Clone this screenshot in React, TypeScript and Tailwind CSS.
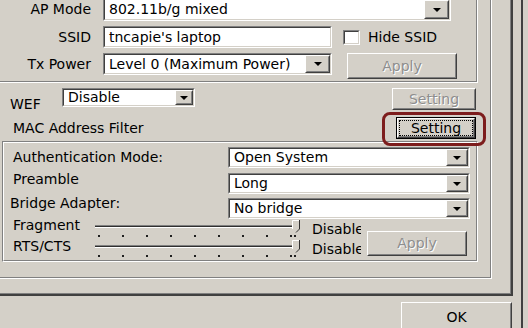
import type { ReactNode } from "react";

// disabled caption: grey text with the white emboss of classic Windows
const dim = "text-[#8e8e8e] [text-shadow:1px_1px_0_#ffffff]";

function Sunken({ className, children }: { className: string; children?: ReactNode }) {
  return (
    <div className={`shrink-0 border border-t-[#808080] border-l-[#808080] border-r-white border-b-white ${className}`}>
      <div className="flex h-full w-full items-center border border-t-[#404040] border-l-[#404040] border-r-[#d4d0c8] border-b-[#d4d0c8] bg-white">
        {children}
      </div>
    </div>
  );
}

function Raised({ className, children }: { className: string; children?: ReactNode }) {
  return (
    <div className={`shrink-0 border border-t-white border-l-white border-r-[#404040] border-b-[#404040] ${className}`}>
      <div className="flex h-full w-full items-center justify-center border border-t-[#d4d0c8] border-l-[#d4d0c8] border-r-[#808080] border-b-[#808080] bg-[#d4d0c8]">
        {children}
      </div>
    </div>
  );
}

function Arrow() {
  return (
    <svg width="8" height="4" viewBox="0 0 8 4">
      <path d="M0 0h8L4 4z" fill="#000" />
    </svg>
  );
}

function Combo({ className, btn, children }: { className: string; btn: string; children: ReactNode }) {
  return (
    <Sunken className={className}>
      <span className="flex-1 overflow-hidden whitespace-nowrap pl-[4px]">{children}</span>
      <Raised className={`h-full ${btn}`}>
        <Arrow />
      </Raised>
    </Sunken>
  );
}

function Slider({ className }: { className?: string }) {
  const ticks = [3, 27, 51, 75, 99, 123, 147, 171, 195, 199];
  return (
    <svg width="207" height="20" viewBox="0 0 207 20" className={`shrink-0 ${className ?? ""}`}>
      <rect x="0" y="6" width="204" height="1" fill="#808080" />
      <rect x="0" y="7" width="204" height="1" fill="#303030" />
      <rect x="0" y="8" width="204" height="1" fill="#ffffff" />
      {ticks.map((t) => (
        <rect key={t} x={t} y="16" width="2" height="2" fill="#202020" />
      ))}
      <path d="M197 1h7v9l-3.5 3.5L197 10z" fill="#d4d0c8" />
      <path d="M197.5 10V1.5h6.5" stroke="#ffffff" fill="none" />
      <path d="M204.5 1v9l-3.5 3.5" stroke="#303030" fill="none" />
    </svg>
  );
}

export default function App() {
  return (
    <div className="flex h-[328px] w-[528px] overflow-hidden bg-[#d4d0c8] font-['DejaVu_Sans',sans-serif] text-[14px] leading-[17px] text-black">
      <div className="flex h-full w-[523px] shrink-0 flex-col border-r-2 border-r-[#404040]">
        {/* tab page */}
        <div className="h-[296px] w-[513px] shrink-0 border-r-2 border-b-2 border-[#404040]">
          <div className="h-full w-full border-r border-b border-[#808080]">
            {/* outer group */}
            <div className="h-[279px] w-[492px] border-r border-b border-white">
              <div className="flex h-full w-full flex-col border-r border-b border-[#808080]">
                {/* wireless group */}
                <div className="h-[83px] w-[478px] shrink-0 border-r border-b border-white">
                  <div className="flex h-full w-full flex-col border-r border-b border-[#808080]">
                    <div className="-mt-[2px] flex h-[23px] items-center">
                      <span className="w-[91px] text-right">AP Mode</span>
                      <Combo className="ml-[12px] h-full w-[348px]" btn="w-[25px]">802.11b/g mixed</Combo>
                    </div>
                    <div className="mt-[5px] flex h-[22px] items-center">
                      <span className="w-[91px] text-right">SSID</span>
                      <Sunken className="ml-[12px] h-full w-[229px]">
                        <span className="pl-[4px]">tncapie's laptop</span>
                      </Sunken>
                      <Sunken className="ml-[11px] h-[15px] w-[17px]" />
                      <span className="ml-[8px]">Hide SSID</span>
                    </div>
                    <div className="mt-[5px] flex items-start">
                      <span className="flex h-[22px] w-[91px] items-center justify-end">Tx Power</span>
                      <Combo className="ml-[12px] h-[22px] w-[229px]" btn="w-[25px]">Level 0 (Maximum Power)</Combo>
                      <Raised className="ml-[15px] h-[26px] w-[110px]">
                        <span className={dim}>Apply</span>
                      </Raised>
                    </div>
                  </div>
                </div>

                <div className="mt-[5px] flex h-[22px] w-[476px] shrink-0 items-start">
                  <span className="mt-[8px] w-[62px] shrink-0 pl-[10px]">WEF</span>
                  <Combo className="h-[19px] w-[133px]" btn="w-[18px]">Disable</Combo>
                  <Raised className="ml-auto h-[22px] w-[84px]">
                    <span className={dim}>Setting</span>
                  </Raised>
                </div>

                <div className="mt-[7px] flex h-[22px] w-[476px] shrink-0 items-center">
                  <span className="pl-[13px]">MAC Address Filter</span>
                  <div className="relative ml-auto h-full w-[80px] shrink-0 border border-black">
                    <Raised className="h-full w-full">
                      <div className="flex h-full w-full items-center justify-center border border-dotted border-black">
                        Setting
                      </div>
                    </Raised>
                    <div className="pointer-events-none absolute -top-[6px] -right-[11px] -bottom-[8px] -left-[15px] rounded-[8px] border-[3px] border-[#7d1d1d]" />
                  </div>
                </div>

                {/* radio group */}
                <div className="ml-[2px] mt-[2px] h-[121px] w-[476px] shrink-0 border border-t-[#808080] border-l-[#808080] border-r-white border-b-white">
                  <div className="flex h-full w-full flex-col border border-t-white border-l-white border-r-[#808080] border-b-[#808080]">
                    <div className="mt-[4px] flex h-[21px] items-center pr-[6px]">
                      <span className="flex-1 pl-[9px]">Authentication Mode:</span>
                      <Combo className="h-full w-[242px]" btn="w-[22px]">Open System</Combo>
                    </div>
                    <div className="mt-[5px] flex h-[21px] items-start pr-[6px]">
                      <span className="-mt-[2px] flex-1 pl-[9px]">Preamble</span>
                      <Combo className="h-full w-[242px]" btn="w-[22px]">Long</Combo>
                    </div>
                    <div className="mt-[4px] flex h-[21px] items-start pr-[6px]">
                      <span className="-mt-[3px] flex-1 pl-[6px]">Bridge Adapter:</span>
                      <Combo className="h-full w-[242px]" btn="w-[22px]">No bridge</Combo>
                    </div>
                    <div className="flex">
                      <div className="flex flex-col">
                        <div className="flex h-[19px]">
                          <span className="-mt-[2px] w-[91px] pl-[9px]">Fragment</span>
                          <Slider />
                        </div>
                        <div className="flex h-[20px]">
                          <span className="w-[91px] pl-[9px]">RTS/CTS</span>
                          <Slider className="mt-[1px]" />
                        </div>
                      </div>
                      <div className="ml-[10px] flex w-[49px] flex-col overflow-hidden whitespace-nowrap leading-[20px]">
                        <span>Disable</span>
                        <span>Disable</span>
                      </div>
                      <Raised className="ml-[6px] mt-[12px] h-[25px] w-[100px]">
                        <span className={dim}>Apply</span>
                      </Raised>
                    </div>
                  </div>
                </div>
              </div>
            </div>
          </div>
        </div>

        <Raised className="ml-[401px] mt-[6px] h-[30px] w-[111px]">
          <span>OK</span>
        </Raised>
      </div>
    </div>
  );
}
